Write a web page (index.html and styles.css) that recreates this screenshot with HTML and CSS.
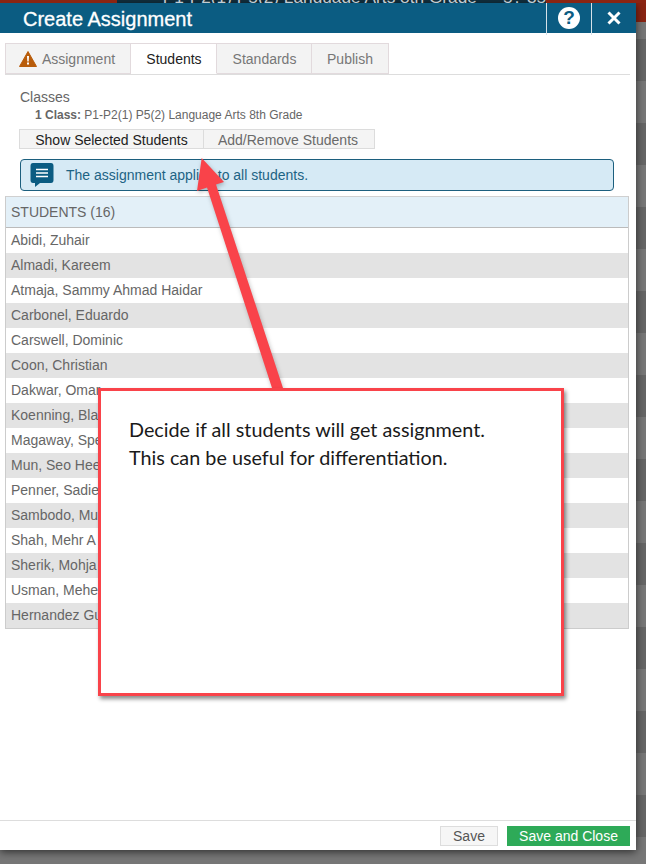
FILE: index.html
```html
<!DOCTYPE html>
<html lang="en">
<head>
    <meta charset="UTF-8">
    <title>Create Assignment</title>
    <link rel="stylesheet" href="styles.css">
</head>
<body>
    <div class="strip">
        <div class="strip-red"></div>
        <div class="strip-title"><span>P1-P2(1) P5(2) Language Arts 8th Grade</span><span>5? 35</span></div>
        <div class="strip-red strip-red-right"></div>
    </div>
    <div class="stage">
        <div class="modal">
            <div class="modal-head">
                <h1>Create Assignment</h1>
                <div class="head-btn"><span class="help">?</span></div>
                <div class="head-btn">
                    <svg width="14" height="14" viewBox="0 0 14 14"><path d="M1.5 1.5 L12.5 12.5 M12.5 1.5 L1.5 12.5" stroke="#fff" stroke-width="3"/></svg>
                </div>
            </div>

            <div class="tabs">
                <div class="tab tab-warn">
                    <svg width="18" height="16" viewBox="0 0 18 16"><path d="M9 0.5 L17.5 15.5 L0.5 15.5 Z" fill="#b85c0a" stroke="#b85c0a" stroke-linejoin="round"/><path d="M8 5 H10 L9.7 10.5 H8.3 Z M8 11.5 H10 V13.5 H8 Z" fill="#fff"/></svg>
                    Assignment
                </div>
                <div class="tab tab-active">Students</div>
                <div class="tab tab-standards">Standards</div>
                <div class="tab tab-publish">Publish</div>
            </div>

            <div class="classes">
                <div class="classes-label">Classes</div>
                <div class="classes-info"><b>1 Class:</b> P1-P2(1) P5(2) Language Arts 8th Grade</div>
            </div>

            <div class="btn-group">
                <div class="seg seg-on">Show Selected Students</div>
                <div class="seg">Add/Remove Students</div>
            </div>

            <div class="alert">
                <svg width="24" height="24" viewBox="0 0 24 24"><path d="M3 0 H21 Q23.5 0 23.5 3 V17 Q23.5 20 21 20 H10 L5 24 V20 H3 Q0.5 20 0.5 17 V3 Q0.5 0 3 0 Z" fill="#0b5c82"/><path d="M6 6.5 H18 M6 10 H18 M6 13.5 H18" stroke="#fff" stroke-width="1.5"/></svg>
                <span>The assignment applies to all students.</span>
            </div>

            <div class="students">
                <div class="students-head">STUDENTS (16)</div>
                <div class="row">Abidi, Zuhair</div>
                <div class="row">Almadi, Kareem</div>
                <div class="row">Atmaja, Sammy Ahmad Haidar</div>
                <div class="row">Carbonel, Eduardo</div>
                <div class="row">Carswell, Dominic</div>
                <div class="row">Coon, Christian</div>
                <div class="row">Dakwar, Omar</div>
                <div class="row">Koenning, Bla</div>
                <div class="row">Magaway, Spe</div>
                <div class="row">Mun, Seo Hee</div>
                <div class="row">Penner, Sadie</div>
                <div class="row">Sambodo, Mu</div>
                <div class="row">Shah, Mehr A</div>
                <div class="row">Sherik, Mohja</div>
                <div class="row">Usman, Mehe</div>
                <div class="row">Hernandez Gu</div>
            </div>

            <div class="modal-foot">
                <div class="foot-btn">Save</div>
                <div class="foot-btn foot-btn-green">Save and Close</div>
            </div>
        </div>
    </div>

    <svg class="arrow" width="646" height="400" viewBox="0 0 646 400">
        <path d="M201.7 158 L224 182 L216 184.5 L283 388 L272 388 L207 187.5 L197 191 Z" fill="#f9434a"/>
    </svg>
    <div class="note">
        <p>Decide if all students will get assignment.</p>
        <p>This can be useful for differentiation.</p>
    </div>
</body>
</html>
```

FILE: styles.css
```css
html, body { margin: 0; padding: 0; }
body { position: relative; width: 646px; height: 864px; overflow: hidden; background: #6d6d6d; font-family: "Liberation Sans", Arial, sans-serif; color: #666; }

.strip { display: flex; height: 3px; background: #12303f; overflow: hidden; }
.strip-red { width: 117px; background: #8a2412; }
.strip-red-right { width: 100px; background: #8a2412; }
.strip-title { flex: 1; display: flex; align-items: flex-end; gap: 26px; padding-left: 46px; color: #c3ccd2; font-size: 17.3px; line-height: 18px; white-space: nowrap; }
.strip-title span { margin-bottom: -3px; }

.stage { height: 861px; background: linear-gradient(#8a2412 0, #8a2412 19px, transparent 19px), repeating-linear-gradient(#777 0, #777 36px, #666 36px, #666 78px, #777 78px, #777 84px); }

.modal { display: flex; flex-direction: column; width: 636px; height: 847px; background: #fff; box-shadow: 0 2px 8px rgba(0,0,0,0.6); }

.modal-head { display: flex; align-items: stretch; height: 30px; background: #0b5c82; color: #fff; }
.modal-head h1 { flex: 1; margin: 0; padding-left: 23px; font-size: 20px; font-weight: normal; line-height: 32px; -webkit-text-stroke: 0.3px #fff; }
.head-btn { display: flex; align-items: center; justify-content: center; width: 44px; height: 32px; border-left: 1px solid #d5e2e9; }
.help { display: block; width: 22px; height: 22px; border-radius: 50%; background: #fff; color: #0b5c82; font-size: 19px; font-weight: bold; line-height: 22px; text-align: center; margin-top: -2px; }
.head-btn svg { margin-top: -2px; }

.tabs { display: flex; height: 31px; margin: 10px 6px 0 5px; border-bottom: 1px solid #ddd; }
.tab { display: flex; align-items: center; justify-content: center; box-sizing: border-box; background: #f3f3f3; border: 1px solid #e2dadd; border-left: 0; font-size: 14px; color: #777; }
.tab-warn { gap: 5px; width: 126px; padding-right: 2px; border-left: 1px solid #e2dadd; }
.tab-active { width: 86px; padding-left: 1px; background: #fff; color: #222; border-bottom: 1px solid #fff; }
.tab-standards { width: 95px; padding-left: 1px; }
.tab-publish { width: 77px; }

.classes { padding: 14px 0 0 20px; }
.classes-label { font-size: 14px; line-height: 16px; color: #666; }
.classes-info { padding: 3px 0 0 15px; font-size: 12px; line-height: 14px; color: #666; }

.btn-group { display: flex; height: 20px; margin: 7px 0 0 19px; }
.seg { display: flex; align-items: center; justify-content: center; box-sizing: border-box; width: 171px; height: 20px; padding: 1px 2px 0 0; background: #f4f4f4; border: 1px solid #dcdcdc; border-left: 0; font-size: 14px; color: #6a6a6a; }
.seg-on { width: 185px; padding-right: 0; border-left: 1px solid #dcdcdc; color: #222; }

.alert { display: flex; align-items: center; gap: 12px; box-sizing: border-box; width: 594px; height: 32px; margin: 10px 0 0 20px; padding-left: 9px; background: #d6eaf5; border: 1px solid #1c5f7e; border-radius: 4px; font-size: 14px; color: #1d6384; }

.students { width: 624px; margin: 5px 0 0 5px; box-sizing: border-box; border: 1px solid #ccc; border-top-color: #d0d0d0; }
.students-head { height: 30px; padding-left: 5px; background: #e3f0f8; border-bottom: 1px solid #bbb; font-size: 14px; line-height: 31px; color: #666; }
.row { height: 25px; padding-left: 5px; font-size: 14px; line-height: 25px; color: #666; background: #fff; }
.row:nth-child(odd) { background: #e3e3e3; }

.modal-foot { display: flex; justify-content: flex-end; gap: 9px; margin-top: auto; height: 30px; padding: 5px 6px 0 0; box-sizing: border-box; border-top: 1px solid #ddd; }
.foot-btn { box-sizing: border-box; width: 58px; height: 20px; background: #f6f6f6; border: 1px solid #ddd; font-size: 14px; line-height: 19px; text-align: center; color: #555; }
.foot-btn-green { width: 123px; background: #2eaa58; border-color: #2eaa58; color: #fff; }

/* annotation laid over the screenshot */
.arrow { position: absolute; left: 0; top: 0; filter: drop-shadow(1px 2px 2px rgba(0,0,0,0.25)); }
.note { position: absolute; left: 98px; top: 388px; box-sizing: border-box; width: 466px; height: 308px; padding: 24px 0 0 28px; background: #fff; border: 3px solid #f9434a; box-shadow: 2px 3px 4px rgba(0,0,0,0.45); font-family: Lato, sans-serif; font-size: 19.8px; line-height: 28px; color: #1a1a1a; }
.note p { margin: 0; }
```
